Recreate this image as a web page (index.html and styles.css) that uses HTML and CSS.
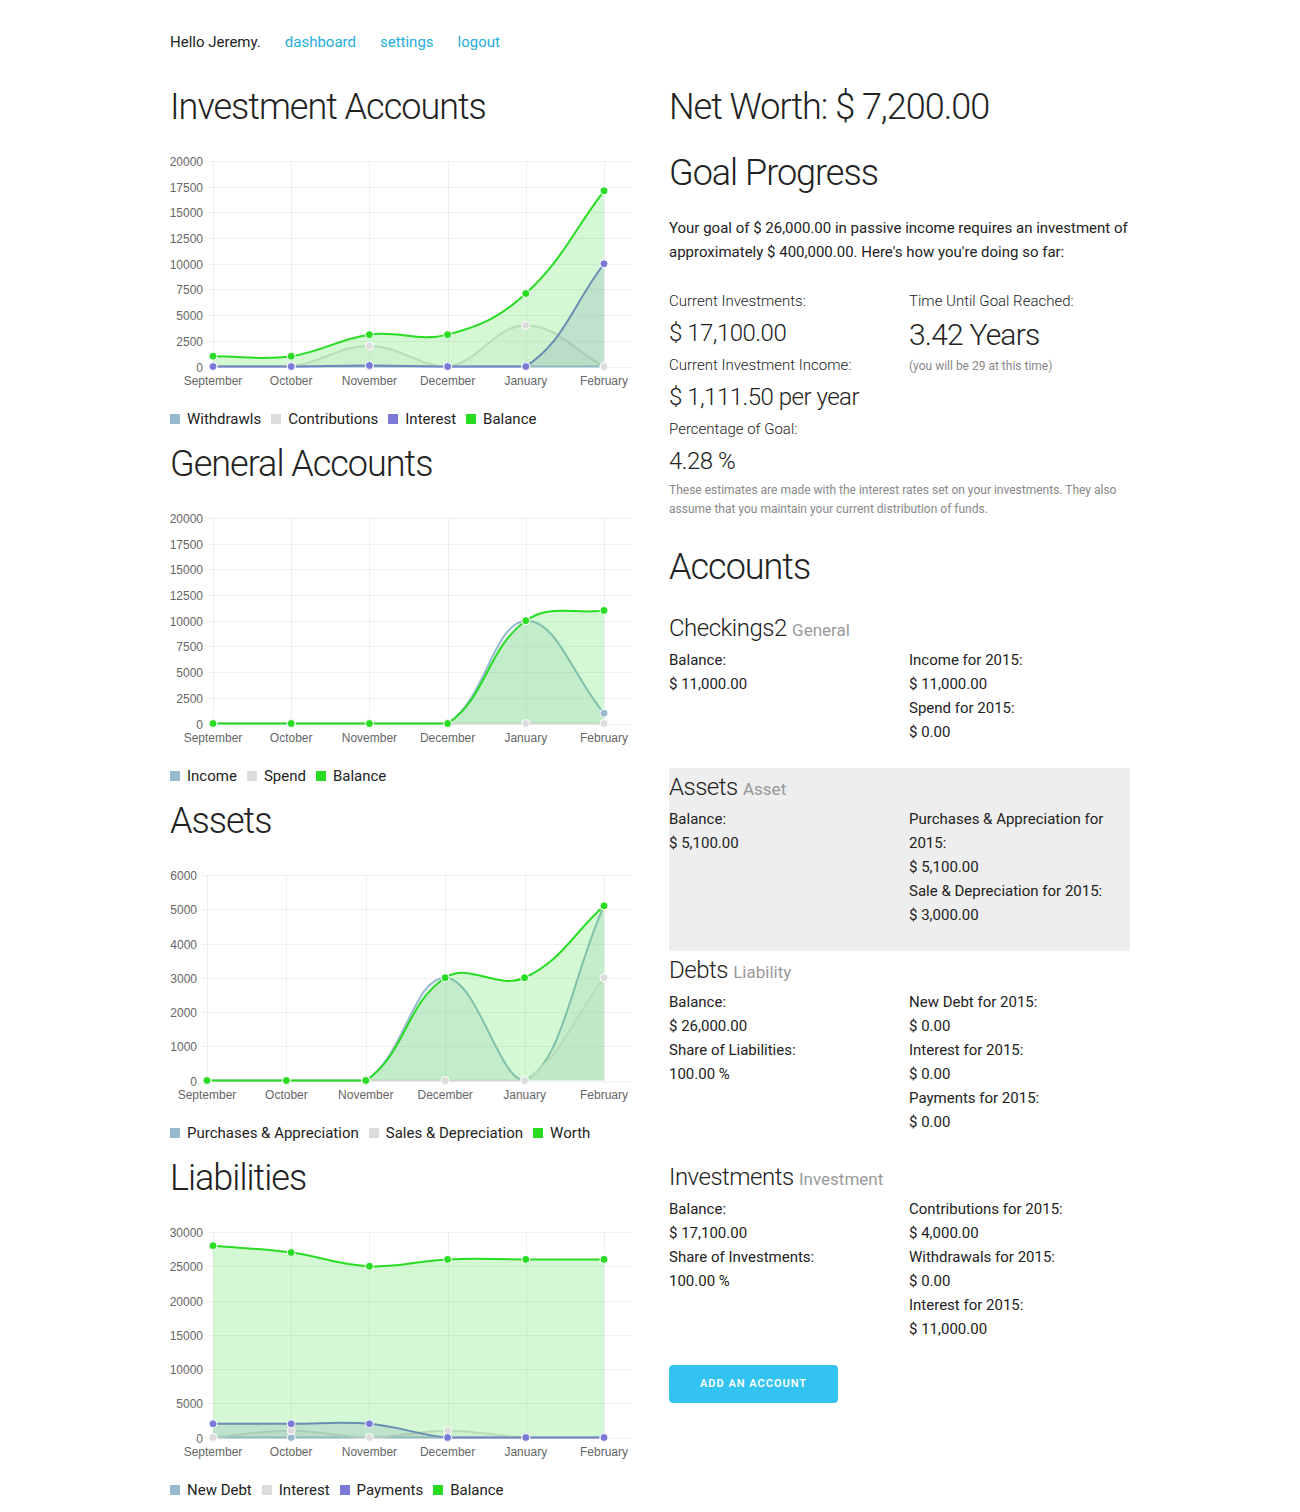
FILE: index.html
```html
<!DOCTYPE html>
<html lang="en">
<head>
<meta charset="utf-8">
<title>Dashboard</title>
<link rel="stylesheet" href="styles.css">
</head>
<body>
<div class="container">
  <nav class="topnav">
    <span class="greeting">Hello Jeremy.</span>
    <a href="#">dashboard</a>
    <a href="#">settings</a>
    <a href="#">logout</a>
  </nav>

  <div class="main">
    <div class="col-left">
      <section class="chart-section">
        <h2 class="page-title">Investment Accounts</h2>
        <svg class="chart" id="chart-investment" width="462" height="254"></svg>
        <ul class="legend">
          <li><span class="swatch sw-blue"></span>Withdrawls</li>
          <li><span class="swatch sw-gray"></span>Contributions</li>
          <li><span class="swatch sw-purple"></span>Interest</li>
          <li><span class="swatch sw-green"></span>Balance</li>
        </ul>
      </section>

      <section class="chart-section">
        <h2 class="page-title">General Accounts</h2>
        <svg class="chart" id="chart-general" width="462" height="254"></svg>
        <ul class="legend">
          <li><span class="swatch sw-blue"></span>Income</li>
          <li><span class="swatch sw-gray"></span>Spend</li>
          <li><span class="swatch sw-green"></span>Balance</li>
        </ul>
      </section>

      <section class="chart-section">
        <h2 class="page-title">Assets</h2>
        <svg class="chart" id="chart-assets" width="462" height="254"></svg>
        <ul class="legend">
          <li><span class="swatch sw-blue"></span>Purchases &amp; Appreciation</li>
          <li><span class="swatch sw-gray"></span>Sales &amp; Depreciation</li>
          <li><span class="swatch sw-green"></span>Worth</li>
        </ul>
      </section>

      <section class="chart-section">
        <h2 class="page-title">Liabilities</h2>
        <svg class="chart" id="chart-liabilities" width="462" height="254"></svg>
        <ul class="legend">
          <li><span class="swatch sw-blue"></span>New Debt</li>
          <li><span class="swatch sw-gray"></span>Interest</li>
          <li><span class="swatch sw-purple"></span>Payments</li>
          <li><span class="swatch sw-green"></span>Balance</li>
        </ul>
      </section>
    </div>

    <div class="col-right">
      <h2 class="page-title">Net Worth: $ 7,200.00</h2>
      <h2 class="page-title goal-title">Goal Progress</h2>
      <p class="goal-text">Your goal of $ 26,000.00 in passive income requires an investment of approximately $ 400,000.00. Here's how you're doing so far:</p>

      <div class="stats">
        <div class="stat-col">
          <div class="stat-label">Current Investments:</div>
          <div class="stat-value">$ 17,100.00</div>
          <div class="stat-label">Current Investment Income:</div>
          <div class="stat-value">$ 1,111.50 per year</div>
          <div class="stat-label">Percentage of Goal:</div>
          <div class="stat-value">4.28 %</div>
        </div>
        <div class="stat-col">
          <div class="stat-label">Time Until Goal Reached:</div>
          <div class="stat-value stat-big">3.42 Years</div>
          <div class="stat-note">(you will be 29 at this time)</div>
        </div>
      </div>
      <p class="disclaimer">These estimates are made with the interest rates set on your investments. They also assume that you maintain your current distribution of funds.</p>

      <h2 class="page-title accounts-title">Accounts</h2>

      <div class="accounts">
        <div class="account">
          <h4 class="account-name">Checkings2 <span class="account-type">General</span></h4>
          <div class="account-grid">
            <div><div>Balance:</div><div>$ 11,000.00</div></div>
            <div><div>Income for 2015:</div><div>$ 11,000.00</div><div>Spend for 2015:</div><div>$ 0.00</div></div>
          </div>
        </div>

        <div class="account account-highlight">
          <h4 class="account-name">Assets <span class="account-type">Asset</span></h4>
          <div class="account-grid">
            <div><div>Balance:</div><div>$ 5,100.00</div></div>
            <div><div>Purchases &amp; Appreciation for 2015:</div><div>$ 5,100.00</div><div>Sale &amp; Depreciation for 2015:</div><div>$ 3,000.00</div></div>
          </div>
        </div>

        <div class="account">
          <h4 class="account-name">Debts <span class="account-type">Liability</span></h4>
          <div class="account-grid">
            <div><div>Balance:</div><div>$ 26,000.00</div><div>Share of Liabilities:</div><div>100.00 %</div></div>
            <div><div>New Debt for 2015:</div><div>$ 0.00</div><div>Interest for 2015:</div><div>$ 0.00</div><div>Payments for 2015:</div><div>$ 0.00</div></div>
          </div>
        </div>

        <div class="account">
          <h4 class="account-name">Investments <span class="account-type">Investment</span></h4>
          <div class="account-grid">
            <div><div>Balance:</div><div>$ 17,100.00</div><div>Share of Investments:</div><div>100.00 %</div></div>
            <div><div>Contributions for 2015:</div><div>$ 4,000.00</div><div>Withdrawals for 2015:</div><div>$ 0.00</div><div>Interest for 2015:</div><div>$ 11,000.00</div></div>
          </div>
        </div>
      </div>

      <a href="#" class="button-primary">Add an account</a>
    </div>
  </div>
</div>
<script src="charts.js"></script>
</body>
</html>
```

FILE: styles.css
```css
* { box-sizing: border-box; }

body {
  margin: 0;
  font-family: Roboto, "Liberation Sans", Arial, sans-serif;
  font-size: 15px;
  line-height: 24px;
  color: #222;
  background: #fff;
}

a { color: #1eaedb; text-decoration: none; }

.container {
  width: 960px;
  margin: 0 auto;
}

.topnav {
  display: flex;
  gap: 24px;
  padding-top: 32px;
  line-height: 20px;
  height: 52px;
  margin-bottom: 28px;
}

.main {
  display: grid;
  grid-template-columns: 461px 461px;
  column-gap: 38px;
}

.page-title {
  margin: 0;
  font-size: 36px;
  font-weight: 300;
  line-height: 54px;
  letter-spacing: -1px;
  color: #222;
}

/* left column charts */
.chart-section { margin-bottom: 8px; }

.chart {
  display: block;
  overflow: visible;
}

.chart .grid line {
  stroke: rgba(0, 0, 0, 0.06);
  stroke-width: 1;
}

.chart .tick {
  font-family: "Liberation Sans", Arial, sans-serif;
  font-size: 12px;
  fill: #666;
}

.legend {
  list-style: none;
  margin: 21px 0 0;
  padding: 0;
  display: flex;
  height: 20px;
  line-height: 20px;
  font-size: 15px;
}

.legend li {
  display: flex;
  align-items: center;
  margin-right: 10px;
}

.swatch {
  width: 10px;
  height: 10px;
  margin-right: 7px;
}

.sw-blue { background: #97bbcd; }
.sw-gray { background: #dcdcdc; }
.sw-purple { background: #7a7ad6; }
.sw-green { background: #28dc23; }

/* right column */
.goal-title { margin-top: 12px; }

.goal-text {
  margin: 16px 0 0;
  line-height: 24px;
}

.stats {
  display: grid;
  grid-template-columns: 221px 1fr;
  column-gap: 19px;
  margin-top: 25px;
}

.stat-label {
  font-weight: 300;
  line-height: 24px;
}

.stat-value {
  font-size: 24px;
  font-weight: 300;
  line-height: 40px;
  letter-spacing: -0.5px;
}

.stat-big {
  font-size: 30px;
  line-height: 44px;
  letter-spacing: -0.8px;
}

.stat-note,
.disclaimer {
  font-size: 12px;
  color: #888;
}

.stat-note { line-height: 18px; }

.disclaimer {
  margin: 0;
  line-height: 19px;
}

.accounts-title { margin-top: 21px; }

.accounts { margin-top: 15px; }

.account {
  padding: 4px 0 24px;
}

.account-highlight { background: #eee; }

.account-name {
  margin: 0 0 5px;
  height: 30px;
  font-size: 24px;
  font-weight: 300;
  line-height: 30px;
  letter-spacing: -0.5px;
}

.account-type {
  font-size: 17px;
  font-weight: 400;
  line-height: 1;
  color: #999;
  letter-spacing: 0;
}

.account-grid {
  display: grid;
  grid-template-columns: 221px 1fr;
  column-gap: 19px;
  line-height: 24px;
}

.button-primary {
  display: inline-block;
  margin-top: 0;
  height: 38px;
  padding: 0 30px;
  line-height: 36px;
  background: #33c3f0;
  border: 1px solid #33c3f0;
  border-radius: 4px;
  color: #fff;
  font-size: 11px;
  font-weight: 600;
  letter-spacing: 1px;
  text-transform: uppercase;
}
```

FILE: charts.js
```js
(function () {
  var NS = 'http://www.w3.org/2000/svg';
  var MONTHS = ['September', 'October', 'November', 'December', 'January', 'February'];
  var TOP = 27, BOTTOM = 232.5, RIGHT = 462, XEND = 434;
  var BLUE = '151,187,205', GRAY = '220,220,220', PURPLE = '122,122,214', GREEN = '40,220,35';

  var charts = [
    { id: 'chart-investment', max: 20000, step: 2500, x0: 43, series: [
      { color: BLUE, data: [0, 0, 0, 0, 0, 0] },
      { color: GRAY, data: [0, 0, 2000, 0, 4000, 0] },
      { color: PURPLE, data: [0, 0, 100, 0, 0, 10000] },
      { color: GREEN, data: [1000, 1000, 3100, 3100, 7100, 17100] }
    ] },
    { id: 'chart-general', max: 20000, step: 2500, x0: 43, series: [
      { color: BLUE, data: [0, 0, 0, 0, 10000, 1000] },
      { color: GRAY, data: [0, 0, 0, 0, 0, 0] },
      { color: GREEN, data: [0, 0, 0, 0, 10000, 11000] }
    ] },
    { id: 'chart-assets', max: 6000, step: 1000, x0: 37, series: [
      { color: BLUE, data: [0, 0, 0, 3000, 0, 5100] },
      { color: GRAY, data: [0, 0, 0, 0, 0, 3000] },
      { color: GREEN, data: [0, 0, 0, 3000, 3000, 5100] }
    ] },
    { id: 'chart-liabilities', max: 30000, step: 5000, x0: 43, series: [
      { color: BLUE, data: [0, 0, 0, 0, 0, 0] },
      { color: GRAY, data: [0, 1000, 0, 1000, 0, 0] },
      { color: PURPLE, data: [2000, 2000, 2000, 0, 0, 0] },
      { color: GREEN, data: [28000, 27000, 25000, 26000, 26000, 26000] }
    ] }
  ];

  function el(tag, attrs, parent) {
    var e = document.createElementNS(NS, tag);
    for (var k in attrs) e.setAttribute(k, attrs[k]);
    parent.appendChild(e);
    return e;
  }

  function clamp(v, a, b) { return Math.max(a, Math.min(b, v)); }

  function spline(pts, x0) {
    var t = 0.4;
    return pts.map(function (cur, i) {
      var prev = pts[i - 1] || cur, next = pts[i + 1] || cur;
      var d01 = Math.hypot(cur.x - prev.x, cur.y - prev.y);
      var d12 = Math.hypot(next.x - cur.x, next.y - cur.y);
      var s01 = d01 / (d01 + d12), s12 = d12 / (d01 + d12);
      if (isNaN(s01)) s01 = 0;
      if (isNaN(s12)) s12 = 0;
      var fa = t * s01, fb = t * s12;
      return {
        px: clamp(cur.x - fa * (next.x - prev.x), x0, XEND),
        py: clamp(cur.y - fa * (next.y - prev.y), TOP, BOTTOM),
        nx: clamp(cur.x + fb * (next.x - prev.x), x0, XEND),
        ny: clamp(cur.y + fb * (next.y - prev.y), TOP, BOTTOM)
      };
    });
  }

  charts.forEach(function (c) {
    var svg = document.getElementById(c.id);
    if (!svg) return;
    var xs = MONTHS.map(function (m, i) { return c.x0 + i * (XEND - c.x0) / 5; });
    var ymap = function (v) { return BOTTOM - v / c.max * (BOTTOM - TOP); };

    var grid = el('g', { 'class': 'grid' }, svg);
    for (var v = 0; v <= c.max; v += c.step) {
      var y = Math.round(ymap(v)) + 0.5;
      el('line', { x1: c.x0 - 5, x2: RIGHT, y1: y, y2: y }, grid);
      var t = el('text', { x: c.x0 - 10, y: y + 4, 'text-anchor': 'end', 'class': 'tick' }, svg);
      t.textContent = v;
    }
    xs.forEach(function (x, i) {
      var gx = Math.round(x) + 0.5;
      el('line', { x1: gx, x2: gx, y1: TOP, y2: BOTTOM + 5 }, grid);
      var t = el('text', { x: x, y: 251, 'text-anchor': 'middle', 'class': 'tick' }, svg);
      t.textContent = MONTHS[i];
    });

    var allPts = [];
    c.series.forEach(function (s) {
      var pts = s.data.map(function (v, i) { return { x: xs[i], y: ymap(v) }; });
      var cp = spline(pts, c.x0);
      var d = 'M' + pts[0].x + ',' + pts[0].y;
      for (var i = 0; i < pts.length - 1; i++) {
        d += ' C' + cp[i].nx + ',' + cp[i].ny + ' ' + cp[i + 1].px + ',' + cp[i + 1].py + ' ' + pts[i + 1].x + ',' + pts[i + 1].y;
      }
      var n = pts.length - 1;
      el('path', { d: d + ' L' + pts[n].x + ',' + BOTTOM + ' L' + pts[0].x + ',' + BOTTOM + ' Z', fill: 'rgba(' + s.color + ',0.2)', stroke: 'none' }, svg);
      el('path', { d: d, fill: 'none', stroke: 'rgb(' + s.color + ')', 'stroke-width': 2 }, svg);
      allPts.push({ color: s.color, pts: pts });
    });

    allPts.forEach(function (s) {
      s.pts.forEach(function (p) {
        el('circle', { cx: p.x, cy: p.y, r: 4, fill: 'rgb(' + s.color + ')', stroke: '#fff', 'stroke-width': 1 }, svg);
      });
    });
  });
})();
```
